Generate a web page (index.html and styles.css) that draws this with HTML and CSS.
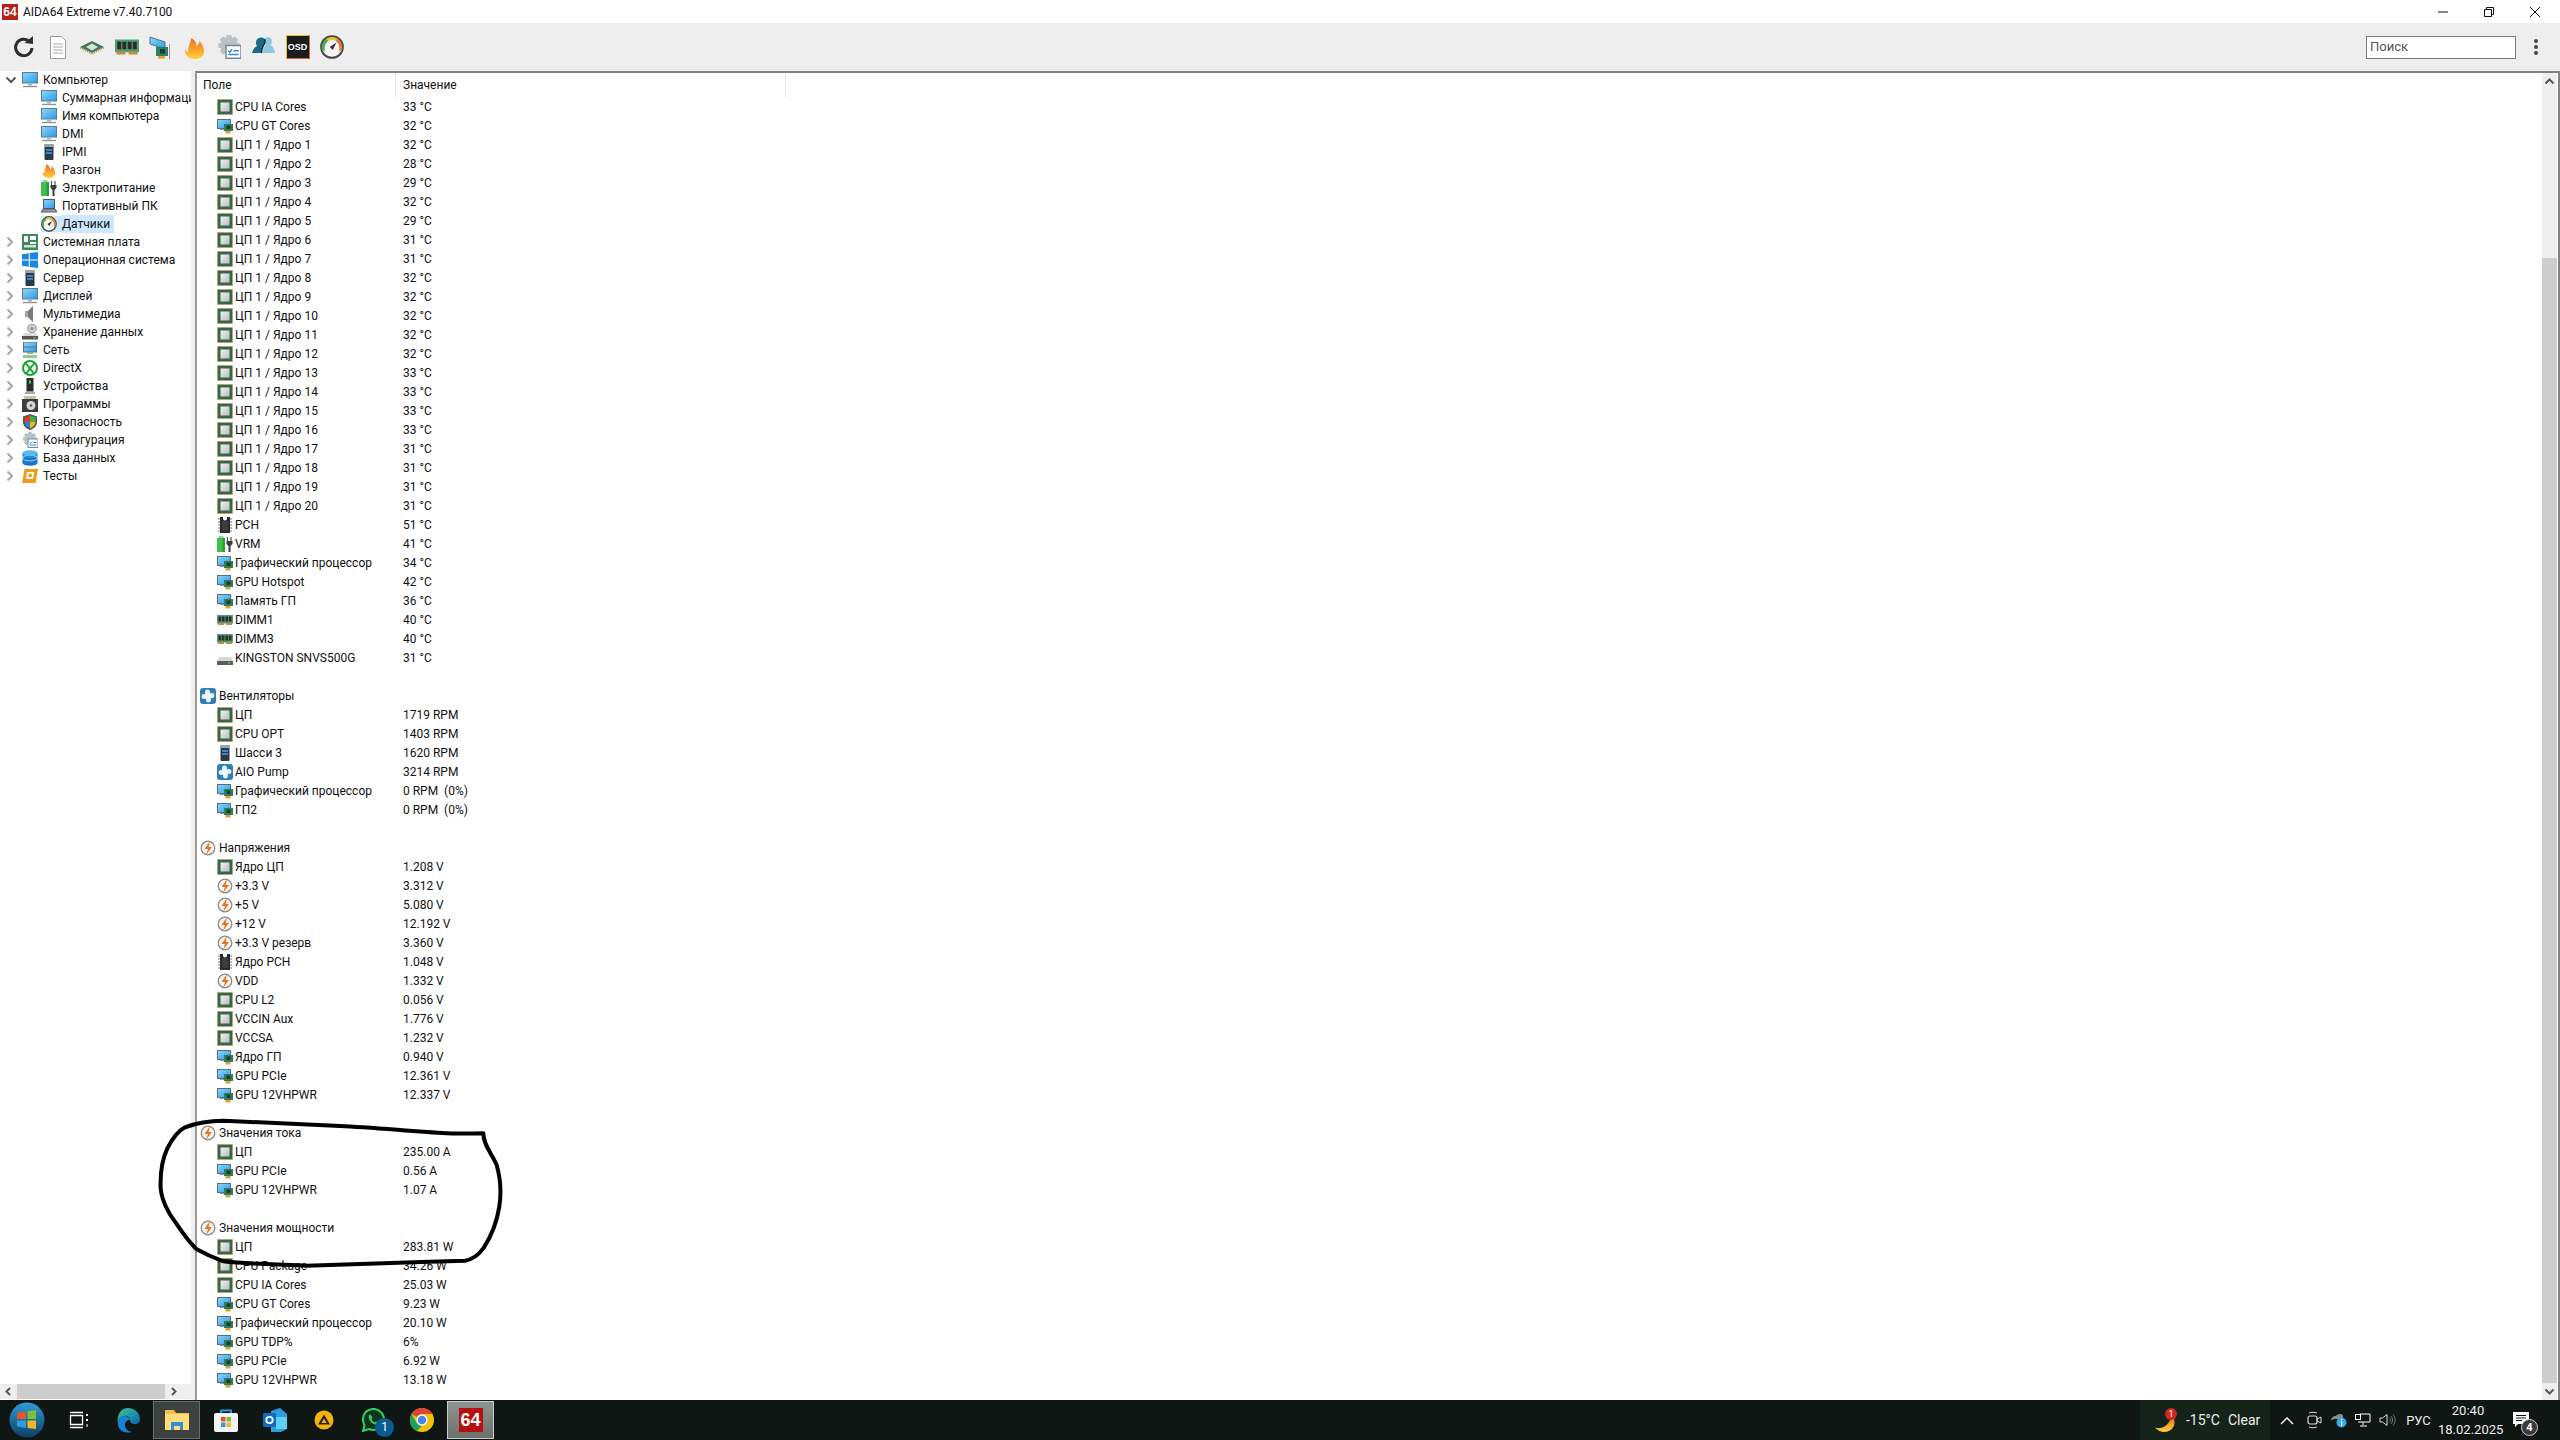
FILE: index.html
```html
<!DOCTYPE html>
<html lang="ru">
<head>
  <meta charset="UTF-8">
  <title>AIDA64 Extreme v7.40.7100</title>
  <link rel="stylesheet" href="styles.css">
</head>
<body>
  <svg class="defs" width="0" height="0">
    <defs>
      <linearGradient id="g-blue" x1="0" y1="0" x2="1" y2="1"><stop offset="0" stop-color="#8fd6fb"/><stop offset="1" stop-color="#2b9ae6"/></linearGradient>
      <linearGradient id="g-fire" x1="0" y1="0" x2="0" y2="1"><stop offset="0" stop-color="#f26a1b"/><stop offset="1" stop-color="#ffd23c"/></linearGradient>
      <linearGradient id="g-steel" x1="0" y1="0" x2="1" y2="1"><stop offset="0" stop-color="#f2f2f2"/><stop offset="1" stop-color="#bdbdbd"/></linearGradient>
      <linearGradient id="g-orb" x1="0" y1="0" x2="0" y2="1"><stop offset="0" stop-color="#2f9bd8"/><stop offset="1" stop-color="#0b3f63"/></linearGradient>
      <linearGradient id="g-edge" x1="0" y1="0" x2="1" y2="1"><stop offset="0" stop-color="#39c98e"/><stop offset="1" stop-color="#0d63b8"/></linearGradient>

      <symbol id="i-cpu" viewBox="0 0 16 16"><rect x=".5" y=".5" width="15" height="15" fill="#35664f" stroke="#c79a3c" stroke-dasharray="1 1"/><rect x="1.5" y="1.5" width="13" height="13" fill="#35664f"/><rect x="3.5" y="3.5" width="9" height="9" fill="url(#g-steel)"/></symbol>
      <symbol id="i-gpu" viewBox="0 0 16 16"><rect x=".5" y="1.5" width="13" height="9" fill="url(#g-blue)" stroke="#54707f"/><path d="M3 11h5v1H3z" fill="#8a9aa3"/><rect x="7" y="6" width="9" height="7" fill="#2f7d5c"/><rect x="9.500" y="7.500" width="4" height="3.500" fill="#1c3c2e"/><rect x="8.500" y="13" width="5" height="2.500" fill="#e3a026"/></symbol>
      <symbol id="i-chip" viewBox="0 0 16 16"><path d="M3 0h3v1.500a2 2 0 0 0 4 0V0h3v16H3z" fill="#2b2b2b"/><path d="M1 2h2M1 5h2M1 8h2M1 11h2M1 14h2M13 2h2M13 5h2M13 8h2M13 11h2M13 14h2" stroke="#777" stroke-width="1"/><rect x="5" y="4" width="6" height="10" fill="#3d3d3d"/></symbol>
      <symbol id="i-power" viewBox="0 0 16 16"><rect x="0" y="2" width="8" height="14" fill="#3fbf4b"/><rect x="1.500" y="0" width="5" height="2" fill="#a8c9a8"/><rect x="5.500" y="2" width="2.500" height="14" fill="#2e9b3a"/><path d="M10.500 1v4M14 1v4" stroke="#555" stroke-width="1.200"/><path d="M9.500 5h6v3l-2 2v6h-2v-6l-2-2z" fill="#3c3c3c"/></symbol>
      <symbol id="i-ram" viewBox="0 0 16 16"><rect x="0" y="3" width="16" height="8.500" fill="#4d9e77"/><rect x="1.500" y="4.500" width="2.600" height="5" fill="#2c2c2c"/><rect x="4.900" y="4.500" width="2.600" height="5" fill="#2c2c2c"/><rect x="8.500" y="4.500" width="2.600" height="5" fill="#2c2c2c"/><rect x="11.900" y="4.500" width="2.600" height="5" fill="#2c2c2c"/><rect x="1" y="11" width="6" height="2" fill="#c98b3b"/><rect x="9" y="11" width="6" height="2" fill="#c98b3b"/></symbol>
      <symbol id="i-ssd" viewBox="0 0 16 16"><path d="M2 7h12l2 4v3H0v-3z" fill="#d8d8d8"/><rect x="0" y="11" width="16" height="4" fill="#5d5d5d"/><rect x="11" y="12" width="2" height="1.600" fill="#39d353"/></symbol>
      <symbol id="i-fan" viewBox="0 0 16 16"><rect width="16" height="16" rx="3" fill="#2f7fb5"/><path d="M8 8C5 7 4 4 6 2c2-1 4 0 4 2 0 2-1 3-2 4zM8 8c1-3 4-4 6-2 1 2 0 4-2 4-2 0-3-1-4-2zM8 8c3 1 4 4 2 6-2 1-4 0-4-2 0-2 1-3 2-4zM8 8c-1 3-4 4-6 2-1-2 0-4 2-4 2 0 3 1 4 2z" fill="#eaf6ff"/></symbol>
      <symbol id="i-volt" viewBox="0 0 16 16"><circle cx="8" cy="8" r="6.800" fill="#f4f4f4" stroke="#8a8a8a" stroke-width="1.300"/><path d="M10 1 4.500 9H8l-2 6 6-8H8.600z" fill="#e8751a"/></symbol>
      <symbol id="i-server" viewBox="0 0 16 16"><rect x="3.500" y="0" width="9" height="16" rx="1" fill="#2c3a48"/><rect x="3.500" y="0" width="9" height="3" fill="#9aa3ab"/><path d="M5 6h6M5 9h6" stroke="#3ea0ea" stroke-width="1.400"/></symbol>
      <symbol id="i-mon" viewBox="0 0 16 16"><rect x=".5" y=".5" width="15" height="10.500" fill="url(#g-blue)" stroke="#5c7c90"/><path d="M6 11.500h4v2H6z" fill="#a8b4bc"/><path d="M1 14.500h14" stroke="#8a97a0" stroke-width="1.400"/></symbol>
      <symbol id="i-fire" viewBox="0 0 16 16"><path d="M8 16C3 16 1 13 1.500 9.500 2 11 3 11.500 3.500 11 3 8 5 6 5.500 2c2 1 3.500 3 3.500 5.500C10 7 11 5.500 11 4c2.500 3 3.500 5.500 3 8-.5 2.500-3 4-6 4z" fill="url(#g-fire)"/></symbol>
      <symbol id="i-laptop" viewBox="0 0 16 16"><rect x="2.500" y="1.500" width="11" height="9" fill="url(#g-blue)" stroke="#46596a"/><path d="M0 14l2-3h12l2 3z" fill="#9aa4ab" stroke="#555"/></symbol>
      <symbol id="i-gauge" viewBox="0 0 16 16"><circle cx="8" cy="8" r="7.200" fill="#f6f6f6" stroke="#4a4a4a" stroke-width="1.400"/><path d="M2.500 10.500A6 6 0 0 1 5 3.200" fill="none" stroke="#49b04a" stroke-width="2"/><path d="M5 3.200a6 6 0 0 1 6 0" fill="none" stroke="#e8c52a" stroke-width="2"/><path d="M11 3.200a6 6 0 0 1 2.500 7.300" fill="none" stroke="#e8792a" stroke-width="2"/><path d="M11 5 6.500 8l2 2z" fill="#333"/></symbol>
      <symbol id="i-board" viewBox="0 0 16 16"><rect width="16" height="16" fill="#3c8a5e"/><rect x="2" y="2" width="4" height="6" fill="#fff"/><rect x="8" y="2" width="6" height="4" fill="#fff"/><rect x="8" y="8" width="6" height="2" fill="#fff"/><rect x="2" y="11" width="12" height="2.500" fill="#cfe6d8"/></symbol>
      <symbol id="i-win" viewBox="0 0 16 16"><path d="M0 2.300 6.800 1.300V7.500H0zM7.800 1.100 16 0V7.500H7.800zM0 8.500H6.800V14.700L0 13.700zM7.800 8.500H16V16L7.800 14.900z" fill="#1b87e0"/></symbol>
      <symbol id="i-speaker" viewBox="0 0 16 16"><path d="M3 5h3l5-5v16l-5-5H3z" fill="#a4a4a4"/><path d="M11 0v16l-5-5V5z" fill="#7a7a7a"/></symbol>
      <symbol id="i-storage" viewBox="0 0 16 16"><circle cx="10" cy="4.500" r="4.300" fill="#cfcfcf" stroke="#8c8c8c"/><circle cx="10" cy="4.500" r="1.500" fill="#8c8c8c"/><path d="M2 9h12l2 3v3H0v-3z" fill="#dcdcdc"/><rect y="12" width="16" height="3.500" fill="#555"/><rect x="11.500" y="13" width="2" height="1.400" fill="#3ed64e"/></symbol>
      <symbol id="i-net" viewBox="0 0 16 16"><rect x="1.500" y="0" width="13" height="10" fill="url(#g-blue)" stroke="#54707f"/><path d="M1.500 5h13" stroke="#54707f"/><path d="M5 10h6v2H5z" fill="#9aa4ab"/><path d="M1 13h14v3H1z" fill="#8bd38f"/></symbol>
      <symbol id="i-xbox" viewBox="0 0 16 16"><circle cx="8" cy="8" r="7" fill="#fff" stroke="#14a82d" stroke-width="2"/><path d="M3.500 3.500C7 6 9 10 11.500 13.500M12.500 3.500C9 6 7 10 4.500 13.500" stroke="#14a82d" stroke-width="2" fill="none"/></symbol>
      <symbol id="i-device" viewBox="0 0 16 16"><rect x="4.500" y="0" width="7" height="13.500" fill="#2b2b2b"/><rect x="7" y="2.500" width="2" height="3" fill="#3ed64e"/><rect x="3" y="14" width="10" height="2" fill="#a9a9a9"/></symbol>
      <symbol id="i-progs" viewBox="0 0 16 16"><rect x="2" y="0" width="12" height="4" fill="#b9c9a6"/><rect y="3" width="16" height="13" fill="#3d3d3d"/><circle cx="9" cy="9.500" r="4.500" fill="#d5d5d5"/><circle cx="9" cy="9.500" r="1.300" fill="#555"/></symbol>
      <symbol id="i-shield" viewBox="0 0 16 16"><path d="M8 0 15 2.500V8c0 4-3 6.500-7 8-4-1.500-7-4-7-8V2.500z" fill="#555"/><path d="M2.500 3.500 8 1.500V8H2.500z" fill="#e0392b"/><path d="M8 1.500 13.500 3.500V8H8z" fill="#3db34a"/><path d="M2.500 8H8v6.500C5 13 2.500 11 2.500 8z" fill="#2b7fd8"/><path d="M8 8h5.500c0 3-2.500 5-5.500 6.500z" fill="#f3b81c"/></symbol>
      <symbol id="i-conf" viewBox="0 0 16 16"><path d="M6.500 0h3l.5 2 2-1 2 2-1 2 2 .5v3l-2 .5 1 2-2 2-2-1-.5 2h-3l-.5-2-2 1-2-2 1-2-2-.5v-3l2-.5-1-2 2-2 2 1z" fill="#b9c0c6"/><rect x="6" y="7" width="10" height="8.500" fill="#fff" stroke="#7b8790"/><path d="M7.500 10.500l1 1 1.500-2M11 10.500h3.500M7.500 13h7" stroke="#2f8fe0" fill="none"/></symbol>
      <symbol id="i-db" viewBox="0 0 16 16"><ellipse cx="8" cy="13" rx="7.500" ry="2.800" fill="#1378c8"/><rect x=".5" y="8" width="15" height="5" fill="#1378c8"/><rect x=".5" y="3" width="15" height="5" fill="#1f8ad8"/><ellipse cx="8" cy="8" rx="7.500" ry="2.800" fill="none" stroke="#fff" stroke-width=".6"/><ellipse cx="8" cy="3" rx="7.500" ry="2.800" fill="#56b8f2"/></symbol>
      <symbol id="i-tests" viewBox="0 0 16 16"><path d="M2.500 1H16l-2.500 14H0z" fill="#f39a1d"/><path d="M5 4h7l-1 7H4z" fill="#fff"/><path d="M6.700 5.800h3.400l-.5 3.400H6.200z" fill="#f39a1d"/></symbol>
      <symbol id="c-right" viewBox="0 0 10 12"><path d="M2.500 1.500 7 6l-4.500 4.500" fill="none" stroke="#a6a6a6" stroke-width="2"/></symbol>
      <symbol id="c-down" viewBox="0 0 12 10"><path d="M1.500 2.500 6 7l4.500-4.500" fill="none" stroke="#555" stroke-width="2"/></symbol>
    </defs>
  </svg>

  <div class="titlebar">
    <span class="app-logo">64</span>
    <span class="app-title">AIDA64 Extreme v7.40.7100</span>
    <div class="winctl">
      <svg class="winbtn" viewBox="0 0 46 20"><path d="M18 10h10" stroke="#111"/></svg>
      <svg class="winbtn" viewBox="0 0 46 20"><path d="M18.500 7.500h7v7h-7zM20.500 7V5.500h7v7H26" fill="none" stroke="#111"/></svg>
      <svg class="winbtn" viewBox="0 0 46 20"><path d="M18 5l10 10M28 5 18 15" stroke="#111"/></svg>
    </div>
  </div>

  <div class="toolbar">
    <svg class="tool" viewBox="0 0 24 24"><path d="M17.500 6.500A8.200 8.200 0 1 0 20 13" fill="none" stroke="#2e2e2e" stroke-width="3"/><path d="M12.500 8 21 9V1z" fill="#2e2e2e"/></svg>
    <svg class="tool" viewBox="0 0 24 24"><path d="M4.500 1.500h11l4 4v18h-15z" fill="#fff" stroke="#9a9a9a"/><path d="M7 9h10M7 12h10M7 15h10M7 18h10" stroke="#a8a8a8"/></svg>
    <svg class="tool" viewBox="0 0 24 24"><path d="M12 6 24 12 12 18 0 12z" fill="#3f7a5d"/><path d="M12 8.500 18 12l-6 3.500L6 12z" fill="#d7e6de"/><path d="M0 12.800 12 19l12-6.200" fill="none" stroke="#b48a3a" stroke-width="1.500" stroke-dasharray="1 1"/></svg>
    <svg class="tool" viewBox="0 0 16 16"><use href="#i-ram"/></svg>
    <svg class="tool" viewBox="0 0 24 24"><path d="M1 2l15 5v7L1 9z" fill="url(#g-blue)" stroke="#54707f"/><rect x="7" y="12" width="12" height="9" fill="#2f7d5c"/><rect x="11" y="14" width="5" height="4.500" fill="#1c3c2e"/><rect x="9" y="21" width="7" height="2.500" fill="#e3a026"/><path d="M20.500 9v15" stroke="#8a9aa3"/></svg>
    <svg class="tool" viewBox="0 0 16 16"><use href="#i-fire"/></svg>
    <svg class="tool" viewBox="0 0 16 16"><use href="#i-conf"/></svg>
    <svg class="tool" viewBox="0 0 24 24"><path d="M12 18c0-5 1-7 3-8-1.500-1-2-3-1.500-5C14.500 2 18 1 20 3.500c1.500 2 1 5-.5 6.500 2 1 4 4 4.500 8z" fill="#8cc9dd"/><path d="M1 18c1-4 3-6 5-7-1.500-2-1.500-5 .5-7S12 2 13.500 4c1 2 .5 4.500-1 6.500-1.500 2.500-2 5-2 7.500z" fill="#176c8c"/><path d="M13.500 4c1 2 .5 4.500-1 6.500-1.500 2.500-2 5-2 7.500" fill="none" stroke="#111" stroke-width="1.200"/></svg>
    <span class="osd">OSD</span>
    <svg class="tool" viewBox="0 0 16 16"><use href="#i-gauge"/></svg>
    <div class="tool-right">
      <div class="search">Поиск</div>
      <div class="kebab"><i></i><i></i><i></i></div>
    </div>
  </div>

  <div class="main">
    <div class="tree-pane">
      <div class="tree">
        <div class="node"><svg class="chev-d"><use href="#c-down"/></svg><svg class="ic"><use href="#i-mon"/></svg><span>Компьютер</span></div>
        <div class="node sub"><svg class="ic"><use href="#i-mon"/></svg><span>Суммарная информация</span></div>
        <div class="node sub"><svg class="ic"><use href="#i-mon"/></svg><span>Имя компьютера</span></div>
        <div class="node sub"><svg class="ic"><use href="#i-mon"/></svg><span>DMI</span></div>
        <div class="node sub"><svg class="ic"><use href="#i-server"/></svg><span>IPMI</span></div>
        <div class="node sub"><svg class="ic"><use href="#i-fire"/></svg><span>Разгон</span></div>
        <div class="node sub"><svg class="ic"><use href="#i-power"/></svg><span>Электропитание</span></div>
        <div class="node sub"><svg class="ic"><use href="#i-laptop"/></svg><span>Портативный ПК</span></div>
        <div class="node sub selected"><svg class="ic"><use href="#i-gauge"/></svg><span>Датчики</span></div>
        <div class="node"><svg class="chev-r"><use href="#c-right"/></svg><svg class="ic"><use href="#i-board"/></svg><span>Системная плата</span></div>
        <div class="node"><svg class="chev-r"><use href="#c-right"/></svg><svg class="ic"><use href="#i-win"/></svg><span>Операционная система</span></div>
        <div class="node"><svg class="chev-r"><use href="#c-right"/></svg><svg class="ic"><use href="#i-server"/></svg><span>Сервер</span></div>
        <div class="node"><svg class="chev-r"><use href="#c-right"/></svg><svg class="ic"><use href="#i-mon"/></svg><span>Дисплей</span></div>
        <div class="node"><svg class="chev-r"><use href="#c-right"/></svg><svg class="ic"><use href="#i-speaker"/></svg><span>Мультимедиа</span></div>
        <div class="node"><svg class="chev-r"><use href="#c-right"/></svg><svg class="ic"><use href="#i-storage"/></svg><span>Хранение данных</span></div>
        <div class="node"><svg class="chev-r"><use href="#c-right"/></svg><svg class="ic"><use href="#i-net"/></svg><span>Сеть</span></div>
        <div class="node"><svg class="chev-r"><use href="#c-right"/></svg><svg class="ic"><use href="#i-xbox"/></svg><span>DirectX</span></div>
        <div class="node"><svg class="chev-r"><use href="#c-right"/></svg><svg class="ic"><use href="#i-device"/></svg><span>Устройства</span></div>
        <div class="node"><svg class="chev-r"><use href="#c-right"/></svg><svg class="ic"><use href="#i-progs"/></svg><span>Программы</span></div>
        <div class="node"><svg class="chev-r"><use href="#c-right"/></svg><svg class="ic"><use href="#i-shield"/></svg><span>Безопасность</span></div>
        <div class="node"><svg class="chev-r"><use href="#c-right"/></svg><svg class="ic"><use href="#i-conf"/></svg><span>Конфигурация</span></div>
        <div class="node"><svg class="chev-r"><use href="#c-right"/></svg><svg class="ic"><use href="#i-db"/></svg><span>База данных</span></div>
        <div class="node"><svg class="chev-r"><use href="#c-right"/></svg><svg class="ic"><use href="#i-tests"/></svg><span>Тесты</span></div>
      </div>
      <div class="hscroll">
        <svg class="sb-btn" viewBox="0 0 17 15"><path d="M10 4 6.500 7.500 10 11" fill="none" stroke="#555" stroke-width="2"/></svg>
        <div class="hthumb"></div>
        <svg class="sb-btn" viewBox="0 0 17 15"><path d="M7 4l3.500 3.500L7 11" fill="none" stroke="#555" stroke-width="2"/></svg>
      </div>
    </div>

    <div class="list-pane">
      <div class="list">
        <div class="list-head"><div class="col-field">Поле</div><div class="col-value">Значение</div><div class="col-rest"></div></div>

        <div class="row"><svg class="ic"><use href="#i-cpu"/></svg><span class="name">CPU IA Cores</span><span>33 °C</span></div>
        <div class="row"><svg class="ic"><use href="#i-gpu"/></svg><span class="name">CPU GT Cores</span><span>32 °C</span></div>
        <div class="row"><svg class="ic"><use href="#i-cpu"/></svg><span class="name">ЦП 1 / Ядро 1</span><span>32 °C</span></div>
        <div class="row"><svg class="ic"><use href="#i-cpu"/></svg><span class="name">ЦП 1 / Ядро 2</span><span>28 °C</span></div>
        <div class="row"><svg class="ic"><use href="#i-cpu"/></svg><span class="name">ЦП 1 / Ядро 3</span><span>29 °C</span></div>
        <div class="row"><svg class="ic"><use href="#i-cpu"/></svg><span class="name">ЦП 1 / Ядро 4</span><span>32 °C</span></div>
        <div class="row"><svg class="ic"><use href="#i-cpu"/></svg><span class="name">ЦП 1 / Ядро 5</span><span>29 °C</span></div>
        <div class="row"><svg class="ic"><use href="#i-cpu"/></svg><span class="name">ЦП 1 / Ядро 6</span><span>31 °C</span></div>
        <div class="row"><svg class="ic"><use href="#i-cpu"/></svg><span class="name">ЦП 1 / Ядро 7</span><span>31 °C</span></div>
        <div class="row"><svg class="ic"><use href="#i-cpu"/></svg><span class="name">ЦП 1 / Ядро 8</span><span>32 °C</span></div>
        <div class="row"><svg class="ic"><use href="#i-cpu"/></svg><span class="name">ЦП 1 / Ядро 9</span><span>32 °C</span></div>
        <div class="row"><svg class="ic"><use href="#i-cpu"/></svg><span class="name">ЦП 1 / Ядро 10</span><span>32 °C</span></div>
        <div class="row"><svg class="ic"><use href="#i-cpu"/></svg><span class="name">ЦП 1 / Ядро 11</span><span>32 °C</span></div>
        <div class="row"><svg class="ic"><use href="#i-cpu"/></svg><span class="name">ЦП 1 / Ядро 12</span><span>32 °C</span></div>
        <div class="row"><svg class="ic"><use href="#i-cpu"/></svg><span class="name">ЦП 1 / Ядро 13</span><span>33 °C</span></div>
        <div class="row"><svg class="ic"><use href="#i-cpu"/></svg><span class="name">ЦП 1 / Ядро 14</span><span>33 °C</span></div>
        <div class="row"><svg class="ic"><use href="#i-cpu"/></svg><span class="name">ЦП 1 / Ядро 15</span><span>33 °C</span></div>
        <div class="row"><svg class="ic"><use href="#i-cpu"/></svg><span class="name">ЦП 1 / Ядро 16</span><span>33 °C</span></div>
        <div class="row"><svg class="ic"><use href="#i-cpu"/></svg><span class="name">ЦП 1 / Ядро 17</span><span>31 °C</span></div>
        <div class="row"><svg class="ic"><use href="#i-cpu"/></svg><span class="name">ЦП 1 / Ядро 18</span><span>31 °C</span></div>
        <div class="row"><svg class="ic"><use href="#i-cpu"/></svg><span class="name">ЦП 1 / Ядро 19</span><span>31 °C</span></div>
        <div class="row"><svg class="ic"><use href="#i-cpu"/></svg><span class="name">ЦП 1 / Ядро 20</span><span>31 °C</span></div>
        <div class="row"><svg class="ic"><use href="#i-chip"/></svg><span class="name">PCH</span><span>51 °C</span></div>
        <div class="row"><svg class="ic"><use href="#i-power"/></svg><span class="name">VRM</span><span>41 °C</span></div>
        <div class="row"><svg class="ic"><use href="#i-gpu"/></svg><span class="name">Графический процессор</span><span>34 °C</span></div>
        <div class="row"><svg class="ic"><use href="#i-gpu"/></svg><span class="name">GPU Hotspot</span><span>42 °C</span></div>
        <div class="row"><svg class="ic"><use href="#i-gpu"/></svg><span class="name">Память ГП</span><span>36 °C</span></div>
        <div class="row"><svg class="ic"><use href="#i-ram"/></svg><span class="name">DIMM1</span><span>40 °C</span></div>
        <div class="row"><svg class="ic"><use href="#i-ram"/></svg><span class="name">DIMM3</span><span>40 °C</span></div>
        <div class="row"><svg class="ic"><use href="#i-ssd"/></svg><span class="name">KINGSTON SNVS500G</span><span>31 °C</span></div>

        <div class="group"><svg class="ic"><use href="#i-fan"/></svg><span>Вентиляторы</span></div>
        <div class="row"><svg class="ic"><use href="#i-cpu"/></svg><span class="name">ЦП</span><span>1719 RPM</span></div>
        <div class="row"><svg class="ic"><use href="#i-cpu"/></svg><span class="name">CPU OPT</span><span>1403 RPM</span></div>
        <div class="row"><svg class="ic"><use href="#i-server"/></svg><span class="name">Шасси 3</span><span>1620 RPM</span></div>
        <div class="row"><svg class="ic"><use href="#i-fan"/></svg><span class="name">AIO Pump</span><span>3214 RPM</span></div>
        <div class="row"><svg class="ic"><use href="#i-gpu"/></svg><span class="name">Графический процессор</span><span class="pre">0 RPM  (0%)</span></div>
        <div class="row"><svg class="ic"><use href="#i-gpu"/></svg><span class="name">ГП2</span><span class="pre">0 RPM  (0%)</span></div>

        <div class="group"><svg class="ic"><use href="#i-volt"/></svg><span>Напряжения</span></div>
        <div class="row"><svg class="ic"><use href="#i-cpu"/></svg><span class="name">Ядро ЦП</span><span>1.208 V</span></div>
        <div class="row"><svg class="ic"><use href="#i-volt"/></svg><span class="name">+3.3 V</span><span>3.312 V</span></div>
        <div class="row"><svg class="ic"><use href="#i-volt"/></svg><span class="name">+5 V</span><span>5.080 V</span></div>
        <div class="row"><svg class="ic"><use href="#i-volt"/></svg><span class="name">+12 V</span><span>12.192 V</span></div>
        <div class="row"><svg class="ic"><use href="#i-volt"/></svg><span class="name">+3.3 V резерв</span><span>3.360 V</span></div>
        <div class="row"><svg class="ic"><use href="#i-chip"/></svg><span class="name">Ядро PCH</span><span>1.048 V</span></div>
        <div class="row"><svg class="ic"><use href="#i-volt"/></svg><span class="name">VDD</span><span>1.332 V</span></div>
        <div class="row"><svg class="ic"><use href="#i-cpu"/></svg><span class="name">CPU L2</span><span>0.056 V</span></div>
        <div class="row"><svg class="ic"><use href="#i-cpu"/></svg><span class="name">VCCIN Aux</span><span>1.776 V</span></div>
        <div class="row"><svg class="ic"><use href="#i-cpu"/></svg><span class="name">VCCSA</span><span>1.232 V</span></div>
        <div class="row"><svg class="ic"><use href="#i-gpu"/></svg><span class="name">Ядро ГП</span><span>0.940 V</span></div>
        <div class="row"><svg class="ic"><use href="#i-gpu"/></svg><span class="name">GPU PCIe</span><span>12.361 V</span></div>
        <div class="row"><svg class="ic"><use href="#i-gpu"/></svg><span class="name">GPU 12VHPWR</span><span>12.337 V</span></div>

        <div class="group"><svg class="ic"><use href="#i-volt"/></svg><span>Значения тока</span></div>
        <div class="row"><svg class="ic"><use href="#i-cpu"/></svg><span class="name">ЦП</span><span>235.00 A</span></div>
        <div class="row"><svg class="ic"><use href="#i-gpu"/></svg><span class="name">GPU PCIe</span><span>0.56 A</span></div>
        <div class="row"><svg class="ic"><use href="#i-gpu"/></svg><span class="name">GPU 12VHPWR</span><span>1.07 A</span></div>

        <div class="group"><svg class="ic"><use href="#i-volt"/></svg><span>Значения мощности</span></div>
        <div class="row"><svg class="ic"><use href="#i-cpu"/></svg><span class="name">ЦП</span><span>283.81 W</span></div>
        <div class="row"><svg class="ic"><use href="#i-cpu"/></svg><span class="name">CPU Package</span><span>34.26 W</span></div>
        <div class="row"><svg class="ic"><use href="#i-cpu"/></svg><span class="name">CPU IA Cores</span><span>25.03 W</span></div>
        <div class="row"><svg class="ic"><use href="#i-gpu"/></svg><span class="name">CPU GT Cores</span><span>9.23 W</span></div>
        <div class="row"><svg class="ic"><use href="#i-gpu"/></svg><span class="name">Графический процессор</span><span>20.10 W</span></div>
        <div class="row"><svg class="ic"><use href="#i-gpu"/></svg><span class="name">GPU TDP%</span><span>6%</span></div>
        <div class="row"><svg class="ic"><use href="#i-gpu"/></svg><span class="name">GPU PCIe</span><span>6.92 W</span></div>
        <div class="row"><svg class="ic"><use href="#i-gpu"/></svg><span class="name">GPU 12VHPWR</span><span>13.18 W</span></div>
      </div>
      <div class="vscroll">
        <svg class="vbtn" viewBox="0 0 15 15"><path d="M3.500 9.500 7.500 5.500l4 4" fill="none" stroke="#555" stroke-width="2"/></svg>
        <div class="vtrack"><div class="vthumb"></div></div>
        <svg class="vbtn" viewBox="0 0 15 15"><path d="M3.500 5.500l4 4 4-4" fill="none" stroke="#555" stroke-width="2"/></svg>
      </div>
    </div>
  </div>

  <div class="taskbar">
    <div class="start">
      <svg width="36" height="36" viewBox="0 0 36 36"><circle cx="18" cy="18" r="17.500" fill="url(#g-orb)"/><path d="M8 11l9-1.500V17H8z" fill="#e8542a"/><path d="M18.500 9.300 27 8v9h-8.500z" fill="#7bbf3a"/><path d="M8 18.500h9V26l-9-1.500z" fill="#2f9be0"/><path d="M18.500 18.500H27V27l-8.500-1z" fill="#f4b724"/></svg>
    </div>
    <div class="task">
      <svg width="20" height="18" viewBox="0 0 20 18"><path d="M1.500 4.500h12v9h-12zM1 1.500h13M1 16.500h13" fill="none" stroke="#fff" stroke-width="1.300"/><path d="M17 3h2v2h-2zM17 8h2v2h-2z" fill="#fff"/><path d="M17.500 13h1v3h-1z" fill="#fff"/></svg>
    </div>
    <div class="task">
      <svg width="26" height="26" viewBox="0 0 26 26"><path d="M13 1c7 0 12 5 12 11 0 3-2 5-5 5-4 0-5-2-5-4 0-3-3-5-6-4-4 1-6 4-6 8C1 8 6 1 13 1z" fill="url(#g-edge)"/><path d="M3 17c0-5 3-8 7-8 3 0 5 2 5 4-3 0-5 2-5 5 0 3 2 6 7 7-8 2-14-2-14-8z" fill="#1582d8"/></svg>
    </div>
    <div class="task active">
      <svg width="24" height="20" viewBox="0 0 24 20"><path d="M0 0h9l2 3h13v17H0z" fill="#f3c24a"/><rect y="4" width="24" height="16" fill="#ffdd78"/><path d="M6 12h12v8H6z" fill="#2f8fd8"/><path d="M9 16h6v4H9z" fill="#ffdd78"/></svg>
    </div>
    <div class="task">
      <svg width="24" height="24" viewBox="0 0 24 24"><path d="M7 5V2.500h10V5" fill="none" stroke="#19a4d8" stroke-width="1.800"/><rect y="5" width="24" height="19" rx="2" fill="#f4f4f4"/><rect x="7" y="9" width="4.500" height="4.500" fill="#e8502a"/><rect x="12.500" y="9" width="4.500" height="4.500" fill="#7bbf3a"/><rect x="7" y="14.500" width="4.500" height="4.500" fill="#2f9be0"/><rect x="12.500" y="14.500" width="4.500" height="4.500" fill="#f4b724"/></svg>
    </div>
    <div class="task">
      <svg width="24" height="24" viewBox="0 0 24 24"><path d="M8 3 17 0l7 6v15l-6 3H8z" fill="#2f9be0"/><path d="M13 9h11v12H13z" fill="#5fd0f4"/><rect y="5" width="13" height="14" rx="1" fill="#0f6cbd"/><circle cx="6.500" cy="12" r="3.200" fill="none" stroke="#fff" stroke-width="1.800"/></svg>
    </div>
    <div class="task">
      <svg width="20" height="20" viewBox="0 0 20 20"><circle cx="10" cy="10" r="9.500" fill="#f7b20c"/><path d="M10 4.500 16 14.500H4z" fill="#222"/><path d="M10 8.500 12.700 13H7.300z" fill="#f7b20c"/></svg>
    </div>
    <div class="task badge-wrap">
      <svg width="24" height="24" viewBox="0 0 24 24"><path d="M2 23l1.500-6A10.500 10.500 0 1 1 8 21z" fill="#10331f" stroke="#2fd05f" stroke-width="2"/><path d="M8 7c-1 2 0 5 2.500 7.500S16 17 17.500 15.500l-2.500-2-1.500 1c-1.500-1-2.500-2-3-3.500l1-1.500-2-3z" fill="#2fd05f"/></svg>
      <span class="wa-badge">1</span>
    </div>
    <div class="task">
      <svg width="24" height="24" viewBox="0 0 24 24"><circle cx="12" cy="12" r="12" fill="#f4c20d"/><path d="M12 0A12 12 0 0 1 22.400 6H12a6 6 0 0 0-5.200 3L1.600 6A12 12 0 0 1 12 0z" fill="#db4437"/><path d="M1.600 6 6.800 15a6 6 0 0 0 5.200 3L6.800 23A12 12 0 0 1 1.600 6z" fill="#1aa260"/><circle cx="12" cy="12" r="5.500" fill="#fff"/><circle cx="12" cy="12" r="4.300" fill="#4285f4"/></svg>
    </div>
    <div class="task running">
      <span class="aida-logo">64</span>
    </div>

    <div class="tray">
      <div class="weather">
        <span class="moon"><svg width="22" height="16" viewBox="0 0 24 18"><path d="M1 13c5 2 12 0 16-7 1-2 2-4 3-5 3 2 4 7 1 12-3 5-10 6-15 4-2-1-4-2-5-4z" fill="url(#g-fire)"/></svg><b>1</b></span>
        <span class="temp">-15°C</span>
        <span>Clear</span>
      </div>
      <div class="tray-ic caret"><svg width="14" height="9" viewBox="0 0 14 9"><path d="M1 8l6-6 6 6" fill="none" stroke="#fff" stroke-width="1.300"/></svg></div>
      <div class="tray-ic"><svg width="16" height="18" viewBox="0 0 16 18"><rect x="1" y="5" width="9" height="8" rx="2" fill="none" stroke="#ddd" stroke-width="1.200"/><path d="M10 8l4-2v6l-4-2zM2 2c2-1 6-1 8 0M2 16c2 1 6 1 8 0" fill="none" stroke="#ddd"/></svg></div>
      <div class="tray-ic"><svg width="18" height="16" viewBox="0 0 18 16"><path d="M1 9c0-3 2-5 5-5 1-2 6-3 7 0v3H5c-2 0-4 1-4 2z" fill="#8c8c8c"/><circle cx="11.500" cy="10.500" r="5" fill="#3aa9ea"/><path d="M11 7h1.200v1.200H11zM11 9.500h1.200V14H11z" fill="#fff"/></svg></div>
      <div class="tray-ic"><svg width="16" height="14" viewBox="0 0 16 14"><path d="M5 1h10v8H3M8 9v3M5 13h7" fill="none" stroke="#fff"/><rect x=".5" y="1.500" width="5" height="5" fill="#0f1613" stroke="#fff"/></svg></div>
      <div class="tray-ic"><svg width="17" height="14" viewBox="0 0 17 14"><path d="M1 5h2.500L8 1.500v11L3.500 9H1z" fill="none" stroke="#ddd"/><path d="M10 4.500a3 3 0 0 1 0 5M12 3a6 6 0 0 1 0 8M14 1.500a8 8 0 0 1 0 11" fill="none" stroke="#777"/></svg></div>
      <div class="lang">РУС</div>
      <div class="clock"><div>20:40</div><div>18.02.2025</div></div>
      <div class="notif">
        <svg width="17" height="16" viewBox="0 0 17 16"><path d="M0 0h16v12H5l-3 3v-3H0z" fill="#fff"/><path d="M3 3.500h10M3 6h10M3 8.500h6" stroke="#0f1613"/></svg>
        <span class="notif-count">4</span>
      </div>
    </div>
  </div>

  <svg class="ink" viewBox="0 0 1200 900" width="400" height="300"><path d="M1030 100 C1000 100 960 102 920 100 C820 95 700 82 600 78 C480 72 360 66 250 62 C210 62 170 68 135 82 C110 95 95 120 82 145 C68 175 60 215 62 265 C65 300 85 340 105 365 C125 395 145 425 170 448 C195 462 225 475 250 484 C300 490 400 494 500 497 C600 495 800 487 975 482 C1000 478 1015 465 1030 445 C1050 415 1070 370 1078 320 C1084 280 1080 230 1070 195 C1055 160 1030 135 1030 100" fill="none" stroke="#000" stroke-width="12" stroke-linecap="round" stroke-linejoin="round"/></svg>
</body>
</html>
```

FILE: styles.css
```css
* {
  box-sizing: border-box;
}

body {
  margin: 0;
  width: 2560px;
  height: 1440px;
  overflow: hidden;
  display: flex;
  flex-direction: column;
  position: relative;
  background-color: white;
  color: #111;
  font-family: Roboto, "Noto Sans", sans-serif;
  font-size: 12px;
}

.defs {
  position: absolute;
}

svg {
  display: block;
  flex: none;
}

.ic {
  width: 16px;
  height: 16px;
}

/* title bar */
.titlebar {
  height: 23px;
  display: flex;
  align-items: center;
  padding-left: 2px;
}

.app-logo {
  width: 16px;
  height: 16px;
  background-color: #b8201c;
  color: white;
  font: bold 12px/16px "Liberation Sans", sans-serif;
  text-align: center;
}

.app-title {
  margin-left: 5px;
}

.winctl {
  margin-left: auto;
  margin-right: 2px;
  display: flex;
}

.winbtn {
  width: 46px;
  height: 20px;
}

/* toolbar */
.toolbar {
  height: 48px;
  background-color: #eee;
  display: flex;
  align-items: center;
  padding-left: 12px;
}

.tool {
  width: 24px;
  height: 24px;
  margin-right: 10.200px;
}

.osd {
  width: 24px;
  height: 24px;
  margin-right: 10.200px;
  background-color: #1c1c1c;
  border: 1px solid;
  border-color: #e3c02a #d8603a #d8603a #e3c02a;
  color: white;
  font: bold 9px/22px "Liberation Sans", sans-serif;
  text-align: center;
}

.tool-right {
  margin-left: auto;
  display: flex;
  align-items: center;
  padding-right: 4px;
}

.search {
  width: 150px;
  height: 23px;
  background-color: white;
  border: 1px solid #7a7a7a;
  color: #555;
  font-size: 13px;
  line-height: 20px;
  padding-left: 3px;
}

.kebab {
  width: 40px;
  display: flex;
  flex-direction: column;
  align-items: center;
  gap: 2px;
}

.kebab i {
  width: 4px;
  height: 4px;
  border-radius: 50%;
  background-color: #444;
}

/* main area */
.main {
  height: 1329px;
  display: flex;
}

.tree-pane {
  width: 195px;
  flex: none;
  display: flex;
  flex-direction: column;
  border-right: 4px solid #eee;
}

.tree {
  flex: 1;
  overflow: hidden;
}

.node {
  height: 18px;
  display: flex;
  align-items: center;
  padding-left: 22px;
  position: relative;
  white-space: nowrap;
}

.node .ic {
  margin-right: 5px;
}

.node.sub {
  padding-left: 41px;
}

.node.selected span {
  background-color: #cce8ff;
  height: 18px;
  line-height: 18px;
  padding-right: 4px;
}

.node.selected .ic {
  background-color: #cce8ff;
  margin-right: 0;
  padding-right: 5px;
  box-sizing: content-box;
}

.chev-r {
  position: absolute;
  left: 5px;
  top: 3px;
  width: 10px;
  height: 12px;
}

.chev-d {
  position: absolute;
  left: 5px;
  top: 4px;
  width: 12px;
  height: 10px;
}

.hscroll {
  height: 15px;
  margin-bottom: 1px;
  display: flex;
  background-color: #eee;
}

.sb-btn {
  width: 17px;
  height: 15px;
}

.hthumb {
  width: 148px;
  background-color: #cdcdcd;
}

.list-pane {
  flex: 1;
  display: flex;
  border-top: 2px solid #808088;
  border-left: 2px solid #9a9a9a;
  border-right: 2px solid #808088;
}

.list {
  flex: 1;
  overflow: hidden;
}

.list-head {
  height: 24px;
  display: flex;
  line-height: 24px;
}

.col-field {
  width: 199px;
  padding-left: 6px;
  border-right: 1px solid #e5e5e5;
}

.col-value {
  width: 390px;
  padding-left: 7px;
  border-right: 1px solid #e5e5e5;
}

.row {
  height: 19px;
  display: flex;
  align-items: center;
  padding-left: 20px;
  white-space: pre;
}

.row .ic {
  margin-right: 2px;
}

.name {
  width: 168px;
}

.group {
  height: 19px;
  margin-top: 19px;
  display: flex;
  align-items: center;
  padding-left: 3px;
}

.group .ic {
  margin-right: 3px;
}

.vscroll {
  width: 15px;
  margin-right: 1px;
  display: flex;
  flex-direction: column;
  background-color: #eee;
}

.vbtn {
  width: 15px;
  height: 17px;
}

.vtrack {
  flex: 1;
  display: flex;
  flex-direction: column;
  justify-content: flex-end;
}

.vthumb {
  height: 1125px;
  background-color: #cdcdcd;
}

/* taskbar */
.taskbar {
  height: 40px;
  background-color: #0f1613;
  display: flex;
  align-items: center;
  color: #eee;
  font-size: 13px;
}

.start {
  width: 54px;
  display: flex;
  justify-content: center;
}

.task {
  width: 49px;
  height: 38px;
  display: flex;
  align-items: center;
  justify-content: center;
  position: relative;
}

.task.active {
  background-color: #3c403e;
  border: 1px solid #6b6e6c;
  margin: 0 1px;
  width: 47px;
}

.task.running {
  background: linear-gradient(#8f9490, #6d716d);
  border: 1px solid #c9cbc9;
  margin: 0 1px;
  width: 47px;
}

.aida-logo {
  width: 24px;
  height: 24px;
  background-color: #b5100f;
  color: white;
  font: bold 18px/24px "Liberation Sans", sans-serif;
  text-align: center;
}

.wa-badge {
  position: absolute;
  left: 27px;
  top: 17px;
  width: 19px;
  height: 19px;
  border-radius: 50%;
  background-color: #0b5c94;
  color: white;
  font-size: 12px;
  line-height: 19px;
  text-align: center;
}

.tray {
  margin-left: auto;
  display: flex;
  align-items: center;
  height: 40px;
}

.weather {
  width: 130px;
  height: 40px;
  background-color: #14231a;
  display: flex;
  align-items: center;
  padding-left: 14px;
  font-size: 14px;
}

.moon {
  position: relative;
  width: 32px;
  padding-top: 8px;
}

.moon b {
  position: absolute;
  left: 11px;
  top: 0;
  width: 12px;
  height: 12px;
  border-radius: 50%;
  background-color: #d0281e;
  color: white;
  font-size: 9px;
  font-weight: normal;
  line-height: 12px;
  text-align: center;
}

.temp {
  width: 42px;
}

.tray-ic {
  width: 24px;
  display: flex;
  justify-content: center;
}

.tray-ic.caret {
  width: 33px;
}

.lang {
  width: 39px;
  text-align: center;
}

.clock {
  width: 60px;
  text-align: center;
  line-height: 19px;
}

.notif {
  width: 62px;
  padding-left: 15px;
  position: relative;
}

.notif-count {
  position: absolute;
  left: 23px;
  top: 7px;
  width: 17px;
  height: 17px;
  border-radius: 50%;
  background-color: #3a3a3a;
  border: 1px solid #ccc;
  color: white;
  font-size: 11px;
  font-weight: bold;
  line-height: 15px;
  text-align: center;
}

/* marker circle drawn over the screenshot */
.ink {
  position: absolute;
  left: 140px;
  top: 1100px;
}
```
